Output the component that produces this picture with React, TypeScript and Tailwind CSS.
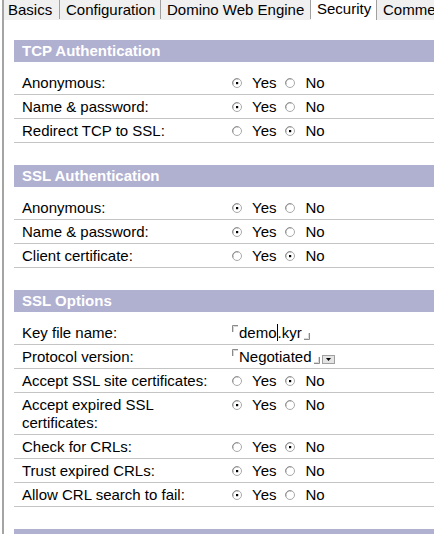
import React from 'react';

type Row =
  | { label: React.ReactNode; kind: 'radio'; yes: boolean; tall?: boolean }
  | { label: React.ReactNode; kind: 'field'; field: 'keyfile' | 'protocol' };

const sections: { title: string; rows: Row[] }[] = [
  {
    title: 'TCP Authentication',
    rows: [
      { label: 'Anonymous:', kind: 'radio', yes: true },
      { label: 'Name & password:', kind: 'radio', yes: true },
      { label: 'Redirect TCP to SSL:', kind: 'radio', yes: false },
    ],
  },
  {
    title: 'SSL Authentication',
    rows: [
      { label: 'Anonymous:', kind: 'radio', yes: true },
      { label: 'Name & password:', kind: 'radio', yes: true },
      { label: 'Client certificate:', kind: 'radio', yes: false },
    ],
  },
  {
    title: 'SSL Options',
    rows: [
      { label: 'Key file name:', kind: 'field', field: 'keyfile' },
      { label: 'Protocol version:', kind: 'field', field: 'protocol' },
      { label: 'Accept SSL site certificates:', kind: 'radio', yes: false },
      {
        label: (
          <>
            Accept expired SSL
            <br />
            certificates:
          </>
        ),
        kind: 'radio',
        yes: true,
        tall: true,
      },
      { label: 'Check for CRLs:', kind: 'radio', yes: false },
      { label: 'Trust expired CRLs:', kind: 'radio', yes: true },
      { label: 'Allow CRL search to fail:', kind: 'radio', yes: true },
    ],
  },
];

function Radio({ checked }: { checked: boolean }) {
  return (
    <svg width="10" height="10" viewBox="0 0 10 10" className="shrink-0">
      <circle cx="5" cy="5" r="4.5" fill="#fff" stroke="#a8a8a8" />
      <path d="M1.2 6.5 A4 4 0 0 1 6.5 1.2" fill="none" stroke="#808080" strokeWidth="0.8" />
      {checked && <rect x="4" y="4" width="2.2" height="2.2" fill="#000" />}
    </svg>
  );
}

function BracketOpen() {
  return (
    <svg width="6" height="7" viewBox="0 0 6 7" className="shrink-0 self-start mt-[1px]">
      <path d="M0.5 7 V0.5 H6" fill="none" stroke="#8a8a8a" />
      <path d="M1.5 7 V1.5 H6" fill="none" stroke="#d8d8d8" />
    </svg>
  );
}

function BracketClose() {
  return (
    <svg width="6" height="7" viewBox="0 0 6 7" className="shrink-0 self-end mb-[2px]">
      <path d="M0 6.5 H5.5 V0" fill="none" stroke="#8a8a8a" />
      <path d="M0 5.5 H4.5 V0" fill="none" stroke="#d8d8d8" />
    </svg>
  );
}

function YesNo({ yes }: { yes: boolean }) {
  return (
    <div className="flex items-center h-[18px]">
      <Radio checked={yes} />
      <span className="ml-[10px]">Yes</span>
      <span className="ml-[9px] flex">
        <Radio checked={!yes} />
      </span>
      <span className="ml-[10px]">No</span>
    </div>
  );
}

function KeyFile() {
  return (
    <div className="flex h-[18px]">
      <BracketOpen />
      <span className="ml-[1px]">demo</span>
      <span className="w-px h-[17px] bg-black" />
      <span>.kyr</span>
      <span className="ml-[2px] flex">
        <BracketClose />
      </span>
    </div>
  );
}

function Protocol() {
  return (
    <div className="flex h-[18px]">
      <BracketOpen />
      <span className="ml-[1px]">Negotiated</span>
      <span className="ml-[2px] flex">
        <BracketClose />
      </span>
      <div className="ml-[2px] self-end mb-[2px] w-[13px] h-[9px] bg-[#e4e4e4] border border-[#a0a0a0] flex items-center justify-center">
        <svg width="5" height="3" viewBox="0 0 5 3">
          <path d="M0 0 H5 L2.5 3 Z" fill="#000" />
        </svg>
      </div>
    </div>
  );
}

const tabs = [
  { name: 'Basics', w: 'w-[56px] pl-[4px]' },
  { name: 'Configuration', w: 'w-[101px] pl-[6px]' },
  { name: 'Domino Web Engine', w: 'w-[150px] pl-[6px]' },
  { name: 'Security', w: 'w-[66px] pl-[6px]', active: true },
  { name: 'Comments', w: 'w-[80px] pl-[6px]' },
];

export default function App() {
  return (
    <div className="w-[434px] h-[534px] overflow-hidden bg-white text-black font-['Liberation_Sans',Arial,sans-serif] text-[15px]">
      <div className="ml-[2px] h-full border-l-2 border-[#a4a4a4] flex flex-col">
        {/* tab strip */}
        <div className="flex h-[20px] bg-[#f0f0f0] shrink-0 whitespace-nowrap">
          {tabs.map((t) =>
            t.active ? (
              <div
                key={t.name}
                className={`${t.w} shrink-0 h-[20px] bg-white border-r border-[#a0a0a0] leading-[17px]`}
              >
                {t.name}
              </div>
            ) : (
              <div
                key={t.name}
                className={`${t.w} shrink-0 h-[19px] border-r border-[#a0a0a0] leading-[19px]`}
              >
                {t.name}
              </div>
            )
          )}
        </div>

        <div className="pl-[10px] pt-[20px] w-[600px]">
          {sections.map((s) => (
            <div key={s.title} className="mb-[22px]">
              <div className="h-[22px] bg-[#b0b0d1] text-white font-bold pl-2 leading-[22px]">
                {s.title}
              </div>
              <div className="h-[9px]" />
              {s.rows.map((r, i) => (
                <div
                  key={i}
                  className={`flex items-start pl-2 pt-[3px] border-b border-[#c4c4c4] leading-[18px] ${
                    r.kind === 'radio' && r.tall ? 'h-[42px]' : 'h-[24px]'
                  }`}
                >
                  <div className="w-[210px] shrink-0">{r.label}</div>
                  {r.kind === 'radio' ? (
                    <YesNo yes={r.yes} />
                  ) : r.field === 'keyfile' ? (
                    <KeyFile />
                  ) : (
                    <Protocol />
                  )}
                </div>
              ))}
            </div>
          ))}
          <div className="h-[22px] bg-[#b0b0d1]" />
        </div>
      </div>
    </div>
  );
}
